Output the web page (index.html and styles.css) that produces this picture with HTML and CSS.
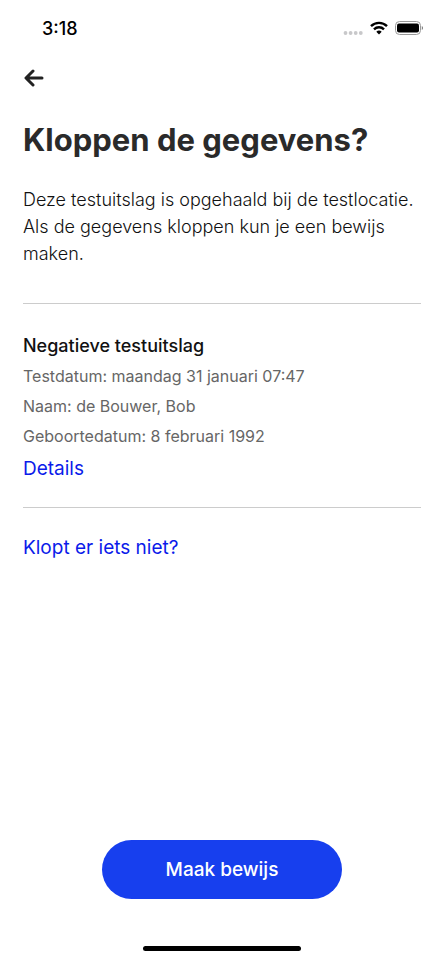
FILE: index.html
```html
<!DOCTYPE html>
<html lang="nl">
<head>
<meta charset="utf-8">
<meta name="viewport" content="width=device-width, initial-scale=1">
<title>Kloppen de gegevens?</title>
<link rel="stylesheet" href="styles.css">
</head>
<body>
<div class="screen">
  <header class="status">
    <span class="time">3:18</span>
    <div class="indicators">
      <svg width="20" height="14" viewBox="0 0 20 14" fill="#c8c8ca" aria-hidden="true"><circle cx="2.500" cy="12" r="1.900"/><circle cx="7.600" cy="12" r="1.900"/><circle cx="12.700" cy="12" r="1.900"/><circle cx="17.800" cy="12" r="1.900"/></svg>
      <svg width="18" height="14" viewBox="0 0 18 14" aria-hidden="true"><g fill="none" stroke="#000" stroke-width="2.4"><path d="M1 5.200a11.400 11.400 0 0 1 16 0"/><path d="M4 8.300a7.200 7.200 0 0 1 10 0"/></g><path d="M9 13.500 6.300 10.800a3.900 3.900 0 0 1 5.400 0z"/></svg>
      <svg width="28" height="14" viewBox="0 0 28 14" aria-hidden="true"><rect x=".5" y=".5" width="25" height="13" rx="4" fill="none" stroke="#999"/><rect x="2" y="2.500" width="22" height="9" rx="2"/><path d="M26.800 5q1.200.6 1.200 2t-1.200 2z" fill="#777"/></svg>
    </div>
  </header>
  <nav class="nav">
    <button class="back" type="button" aria-label="Terug">
      <svg width="20" height="18" viewBox="0 0 20 18" fill="none" stroke="#222" stroke-width="3" stroke-linecap="round" stroke-linejoin="round" aria-hidden="true"><path d="M9 2 2 9l7 7M2.500 9H18"/></svg>
    </button>
  </nav>
  <main class="content">
    <h1>Kloppen de gegevens?</h1>
    <p class="intro">Deze testuitslag is opgehaald bij de testlocatie. Als de gegevens kloppen kun je een bewijs maken.</p>
    <section class="result">
      <h2>Negatieve testuitslag</h2>
      <p>Testdatum: maandag 31 januari 07:47</p>
      <p>Naam: de Bouwer, Bob</p>
      <p>Geboortedatum: 8 februari 1992</p>
      <a class="link" href="#details">Details</a>
    </section>
    <a class="link help" href="#hulp">Klopt er iets niet?</a>
  </main>
  <footer class="footer">
    <button class="primary" type="button">Maak bewijs</button>
    <div class="home"></div>
  </footer>
</div>
</body>
</html>
```
FILE: styles.css
```css
* { box-sizing: border-box; }
body { margin: 0; background: #fff; color: #111; font-family: Inter, "Liberation Sans", sans-serif; }
h1, h2, p { margin: 0; }
.screen { min-height: 100vh; display: flex; flex-direction: column; }
.status { display: flex; align-items: center; justify-content: space-between; height: 56px; padding: 0 21px 0 42px; }
.time { font-size: 18px; font-weight: 500; color: #000; }
.indicators { display: flex; align-items: center; gap: 7px; }
.nav { padding: 12px 24px; }
.back { display: flex; padding: 0; border: 0; background: none; height: 20px; align-items: center; }
.content { flex: 1; padding: 20px 23px; }
h1 { font-size: 31px; line-height: 40px; font-weight: 700; color: #2a2a2a; }
.intro { margin-top: 26px; font-size: 18px; line-height: 27px; font-weight: 300; }
.result { margin-top: 36px; padding: 28px 0 20px; border-top: 1px solid #ccc; border-bottom: 1px solid #ccc; }
h2 { margin-bottom: 1px; font-size: 18px; line-height: 28px; font-weight: 500; }
.result p { font-size: 16px; line-height: 30px; font-weight: 400; color: #666; }
.link { display: block; width: fit-content; font-size: 19px; line-height: 36px; font-weight: 400; color: #0b1bea; text-decoration: none; }
.help { margin-top: 22px; }
.footer { display: flex; flex-direction: column; align-items: center; padding-bottom: 9px; }
.primary { width: 54%; height: 59px; border: 0; border-radius: 30px; background: #173fee; color: #fff; font: 500 19px Inter, "Liberation Sans", sans-serif; }
.home { width: 158px; height: 5px; margin-top: 47px; border-radius: 3px; background: #000; }
```
